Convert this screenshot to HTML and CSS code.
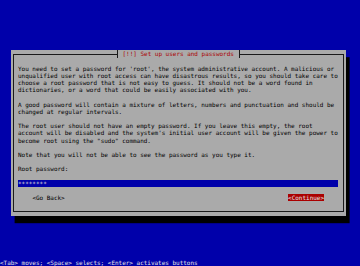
FILE: index.html
```html
<!DOCTYPE html>
<html>
  <head>
    <meta charset="UTF-8" />
    <title>Set up users and passwords</title>
    <link rel="stylesheet" href="styles.css">
  </head>
  <body>
    <div class="screen">
      <div class="dialog">
        <div class="frame">
          <div class="title">[!!] Set up users and passwords</div>
          <div class="content">
            <p>You need to set a password for 'root', the system administrative account. A malicious or<br>unqualified user with root access can have disastrous results, so you should take care to<br>choose a root password that is not easy to guess. It should not be a word found in<br>dictionaries, or a word that could be easily associated with you.</p>
            <p>A good password will contain a mixture of letters, numbers and punctuation and should be<br>changed at regular intervals.</p>
            <p>The root user should not have an empty password. If you leave this empty, the root<br>account will be disabled and the system's initial user account will be given the power to<br>become root using the "sudo" command.</p>
            <p>Note that you will not be able to see the password as you type it.</p>
            <p>Root password:</p>
            <div class="entry">********</div>
            <div class="buttons">
              <span class="btn">&lt;Go Back&gt;</span>
              <span class="btn active">&lt;Continue&gt;</span>
            </div>
          </div>
        </div>
      </div>
      <div class="status">&lt;Tab&gt; moves; &lt;Space&gt; selects; &lt;Enter&gt; activates buttons</div>
    </div>
  </body>
</html>
```

FILE: styles.css
```css
/* text console: 100 cols x 37 rows, one cell = 3.6px x 7.19px */
body {
  margin: 0;
  background-color: #0000aa;
  font-family: "DejaVu Sans Mono", "Liberation Mono", monospace;
  font-size: 5.98px;
  line-height: 7.19px;
  overflow: hidden;
}
.screen {
  display: flex;
  flex-direction: column;
  width: 360px;
  height: 266px;
}
.dialog {
  box-sizing: border-box;
  width: 334.8px;
  height: 165.37px;
  margin: 50.33px 0 0 10.8px;
  padding: 3.6px 1.8px;
  background-color: #aaaaaa;
  color: #000000;
  box-shadow: 3.6px 7.19px 0 #000000;
}
.frame {
  box-sizing: border-box;
  height: 100%;
  border: 1px solid #1a1a1a;
}
.title {
  width: fit-content;
  height: 7.19px;
  margin: -4.6px auto 0;
  padding: 0 4.8px;
  border-left: 1px solid #1a1a1a;
  border-right: 1px solid #1a1a1a;
  background-color: #aaaaaa;
  color: #aa0000;
  white-space: pre;
}
.content {
  padding: 7.19px 4.4px 0;
}
p {
  margin: 0 0 7.19px;
  white-space: nowrap;
}
.entry {
  height: 7.19px;
  margin-bottom: 7.19px;
  background-color: #0000aa;
  color: #dddddd;
}
.buttons {
  display: flex;
  justify-content: space-between;
  padding: 0 14.4px;
}
.btn {
  white-space: pre;
}
.btn.active {
  background-color: #aa0000;
  color: #e6e6e6;
}
.status {
  margin-top: auto;
  color: #e6e6e6;
  white-space: pre;
}
```
